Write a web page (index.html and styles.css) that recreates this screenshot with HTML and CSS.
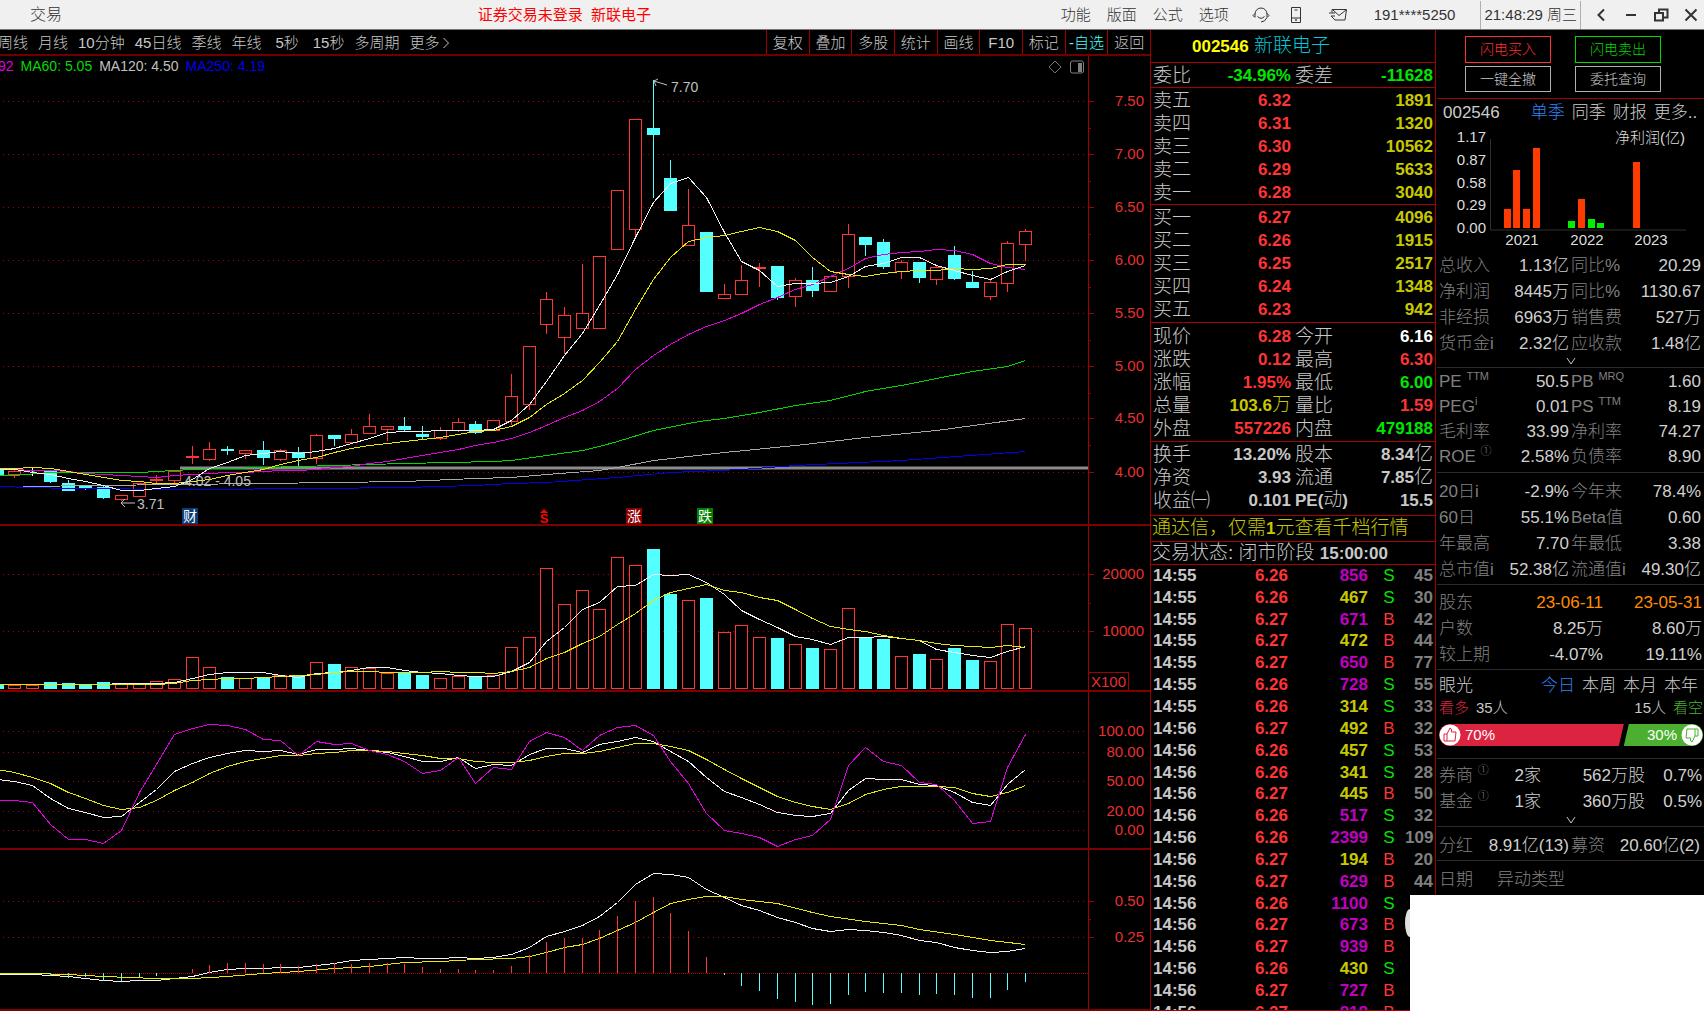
FILE: index.html
```html
<!DOCTYPE html>
<html lang="zh-CN">
<head>
<meta charset="utf-8">
<title>新联电子 002546</title>
<link rel="stylesheet" href="styles.css">
</head>
<body>
<header class="titlebar">
  <button class="title-trade">交易</button>
  <p class="title-status"><span>证券交易未登录</span> <span>新联电子</span></p>
  <nav class="title-menu">
    <button>功能</button><button>版面</button><button>公式</button><button>选项</button>
  </nav>
  <div class="title-icons">
    <button aria-label="客服"><svg width="18" height="18" viewBox="0 0 18 18"><path d="M3 11V8a6 6 0 0 1 12 0v3M3 7.500L1 9.500l2 2M15 7.500l2 2l-2 2q-2 4.500-6 4.500M5.500 10.500q3.500 3.500 7 0"/></svg></button>
    <button aria-label="手机"><svg width="12" height="18" viewBox="0 0 12 18"><path d="M1.500 1.500h9v15h-9zM4.500 4h3M1.500 12h9"/><circle cx="6" cy="14" r=".6"/></svg></button>
    <button aria-label="消息"><svg width="20" height="14" viewBox="0 0 20 14"><path d="M4 4.500V1.500h14.500l-1.500 10.500H7l-4-4h4M5 2l6 5.500 7-5.500M1 5h6"/></svg></button>
  </div>
  <span class="title-user">191****5250</span>
  <time class="title-clock">21:48:29 周三</time>
  <div class="window-buttons">
    <button aria-label="后退"><svg width="16" height="16" viewBox="0 0 16 16"><path d="M11 2.500L5.500 8l5.500 5.500"/></svg></button>
    <button aria-label="最小化"><svg width="16" height="16" viewBox="0 0 16 16"><path d="M3 8h10"/></svg></button>
    <button aria-label="还原"><svg width="16" height="16" viewBox="0 0 16 16"><path d="M2 6h8v7.500H2zM6 6V2.500h8.500v8H10"/></svg></button>
    <button aria-label="关闭"><svg width="16" height="16" viewBox="0 0 16 16"><path d="M2.500 2.500l11 11M13.500 2.500l-11 11"/></svg></button>
  </div>
</header>

<main class="workspace">
  <section class="charts">
    <div class="toolbar">
      <nav class="periods">
        <button>周线</button><button>月线</button><button>10分钟</button><button>45日线</button><button>季线</button><button>年线</button><button class="wide">5秒</button><button class="wide">15秒</button><button>多周期</button><button>更多 <svg width="8" height="12" viewBox="0 0 8 12"><path d="M1.500 1l5 5-5 5"/></svg></button>
      </nav>
      <nav class="tools">
        <button>复权</button><button>叠加</button><button>多股</button><button>统计</button><button>画线</button><button>F10</button><button>标记</button><button class="active">-自选</button><button>返回</button>
      </nav>
    </div>
    <div class="panels">
      <div class="panel">
        <p class="legend"><span class="ma20">92</span><span class="ma60">MA60: 5.05</span><span class="ma120">MA120: 4.50</span><span class="ma250">MA250: 4.19</span></p>
        <svg class="plot" id="price"></svg>
      </div>
      <div class="panel"><svg class="plot" id="volume"></svg></div>
      <div class="panel"><svg class="plot" id="kdj"></svg></div>
      <div class="panel"><svg class="plot" id="macd"></svg></div>
    </div>
  </section>

  <section class="quote">
    <h1 class="stock"><b>002546</b> <span>新联电子</span></h1>
    <table class="pairs"><tr><th>委比</th><td class="green">-34.96%</td><th>委差</th><td class="green">-11628</td></tr></table>
    <table class="pairs">
      <tr><th>卖五</th><td class="red">6.32</td><th></th><td class="olive">1891</td></tr>
      <tr><th>卖四</th><td class="red">6.31</td><th></th><td class="olive">1320</td></tr>
      <tr><th>卖三</th><td class="red">6.30</td><th></th><td class="olive">10562</td></tr>
      <tr><th>卖二</th><td class="red">6.29</td><th></th><td class="olive">5633</td></tr>
      <tr><th>卖一</th><td class="red">6.28</td><th></th><td class="olive">3040</td></tr>
    </table>
    <table class="pairs bids">
      <tr><th>买一</th><td class="red">6.27</td><th></th><td class="olive">4096</td></tr>
      <tr><th>买二</th><td class="red">6.26</td><th></th><td class="olive">1915</td></tr>
      <tr><th>买三</th><td class="red">6.25</td><th></th><td class="olive">2517</td></tr>
      <tr><th>买四</th><td class="red">6.24</td><th></th><td class="olive">1348</td></tr>
      <tr><th>买五</th><td class="red">6.23</td><th></th><td class="olive">942</td></tr>
    </table>
    <table class="pairs stats">
      <tr><th>现价</th><td class="red">6.28</td><th>今开</th><td class="white">6.16</td></tr>
      <tr><th>涨跌</th><td class="red">0.12</td><th>最高</th><td class="red">6.30</td></tr>
      <tr><th>涨幅</th><td class="red">1.95%</td><th>最低</th><td class="green">6.00</td></tr>
      <tr><th>总量</th><td class="olive">103.6<i>万</i></td><th>量比</th><td class="red">1.59</td></tr>
      <tr><th>外盘</th><td class="red">557226</td><th>内盘</th><td class="green">479188</td></tr>
    </table>
    <table class="pairs capital">
      <tr><th>换手</th><td>13.20%</td><th>股本</th><td>8.34<i>亿</i></td></tr>
      <tr><th>净资</th><td>3.93</td><th>流通</th><td>7.85<i>亿</i></td></tr>
      <tr><th>收益㈠</th><td>0.101</td><th><b>PE(</b>动<b>)</b></th><td>15.5</td></tr>
    </table>
    <p class="promo">通达信，仅需<b>1</b>元查看千档行情</p>
    <p class="state">交易状态: 闭市阶段 <b>15:00:00</b></p>
    <div class="ticks-wrap"><table class="ticks">
      <tr><td>14:55</td><td>6.26</td><td class="big">856</td><td class="s">S</td><td>45</td></tr>
      <tr><td>14:55</td><td>6.26</td><td>467</td><td class="s">S</td><td>30</td></tr>
      <tr><td>14:55</td><td>6.27</td><td class="big">671</td><td class="b">B</td><td>42</td></tr>
      <tr><td>14:55</td><td>6.27</td><td>472</td><td class="b">B</td><td>44</td></tr>
      <tr><td>14:55</td><td>6.27</td><td class="big">650</td><td class="b">B</td><td>77</td></tr>
      <tr><td>14:55</td><td>6.26</td><td class="big">728</td><td class="s">S</td><td>55</td></tr>
      <tr><td>14:55</td><td>6.26</td><td>314</td><td class="s">S</td><td>33</td></tr>
      <tr><td>14:56</td><td>6.27</td><td>492</td><td class="b">B</td><td>32</td></tr>
      <tr><td>14:56</td><td>6.26</td><td>457</td><td class="s">S</td><td>53</td></tr>
      <tr><td>14:56</td><td>6.26</td><td>341</td><td class="s">S</td><td>28</td></tr>
      <tr><td>14:56</td><td>6.27</td><td>445</td><td class="b">B</td><td>50</td></tr>
      <tr><td>14:56</td><td>6.26</td><td class="big">517</td><td class="s">S</td><td>32</td></tr>
      <tr><td>14:56</td><td>6.26</td><td class="big">2399</td><td class="s">S</td><td>109</td></tr>
      <tr><td>14:56</td><td>6.27</td><td>194</td><td class="b">B</td><td>20</td></tr>
      <tr><td>14:56</td><td>6.27</td><td class="big">629</td><td class="b">B</td><td>44</td></tr>
      <tr><td>14:56</td><td>6.26</td><td class="big">1100</td><td class="s">S</td><td></td></tr>
      <tr><td>14:56</td><td>6.27</td><td class="big">673</td><td class="b">B</td><td></td></tr>
      <tr><td>14:56</td><td>6.27</td><td class="big">939</td><td class="b">B</td><td></td></tr>
      <tr><td>14:56</td><td>6.26</td><td>430</td><td class="s">S</td><td></td></tr>
      <tr><td>14:56</td><td>6.27</td><td class="big">727</td><td class="b">B</td><td></td></tr>
      <tr><td>14:56</td><td>6.27</td><td class="big">818</td><td class="b">B</td><td></td></tr>
    </table></div>
  </section>

  <aside class="side">
    <div class="orders">
      <button class="buy">闪电买入</button><button class="sell">闪电卖出</button>
      <button>一键全撤</button><button>委托查询</button>
    </div>
    <nav class="report-tabs"><b>002546</b><button class="on">单季</button><button>同季</button><button>财报</button><button>更多..</button></nav>
    <svg class="profit" width="258" height="122" viewBox="0 0 258 122" role="img" aria-label="净利润(亿)">
      <path class="axis" d="M50.500 13v91H246"/>
      <g class="up"><rect x="64" y="83" width="7" height="19"/><rect x="73" y="44" width="7" height="58"/><rect x="83" y="83" width="7" height="19"/><rect x="93" y="22" width="7" height="80"/><rect x="138" y="73" width="7" height="29"/><rect x="193" y="36" width="7" height="66"/></g>
      <g class="down"><rect x="128" y="95" width="7" height="7"/><rect x="148" y="93" width="7" height="9"/><rect x="157" y="97" width="7" height="5"/></g>
      <g class="scale"><text x="46" y="16">1.17</text><text x="46" y="39">0.87</text><text x="46" y="62">0.58</text><text x="46" y="84">0.29</text><text x="46" y="107">0.00</text><text x="245" y="17">净利润(亿)</text></g>
      <g class="years"><text x="82" y="119">2021</text><text x="147" y="119">2022</text><text x="211" y="119">2023</text></g>
    </svg>
    <table class="facts first">
      <tr><th>总收入</th><td>1.13亿</td><th>同比%</th><td>20.29</td></tr>
      <tr><th>净利润</th><td>8445万</td><th>同比%</th><td>1130.67</td></tr>
      <tr><th>非经损</th><td>6963万</td><th>销售费</th><td>527万</td></tr>
      <tr><th>货币金i</th><td>2.32亿</td><th>应收款</th><td>1.48亿</td></tr>
    </table>
    <button class="more" aria-label="展开财务"><svg width="10" height="8" viewBox="0 0 10 8"><path d="M1 1l4 6 4-6"/></svg></button>
    <table class="facts tight">
      <tr><th>PE <sup>TTM</sup></th><td>50.5</td><th>PB <sup>MRQ</sup></th><td>1.60</td></tr>
      <tr><th>PEG<sup>i</sup></th><td>0.01</td><th>PS <sup>TTM</sup></th><td>8.19</td></tr>
      <tr><th>毛利率</th><td>33.99</td><th>净利率</th><td>74.27</td></tr>
      <tr><th>ROE <sup>①</sup></th><td>2.58%</td><th>负债率</th><td>8.90</td></tr>
    </table>
    <table class="facts">
      <tr><th>20日i</th><td>-2.9%</td><th>今年来</th><td>78.4%</td></tr>
      <tr><th>60日</th><td>55.1%</td><th>Beta值</th><td>0.60</td></tr>
      <tr><th>年最高</th><td>7.70</td><th>年最低</th><td>3.38</td></tr>
      <tr><th>总市值i</th><td>52.38亿</td><th>流通值i</th><td>49.30亿</td></tr>
    </table>
    <table class="facts holders">
      <tr><th>股东</th><td class="date">23-06-11</td><td class="date">23-05-31</td></tr>
      <tr><th>户数</th><td>8.25万</td><td>8.60万</td></tr>
      <tr><th>较上期</th><td>-4.07%</td><td>19.11%</td></tr>
    </table>
    <section class="mood">
      <nav class="report-tabs"><span>眼光</span><button class="on">今日</button><button>本周</button><button>本月</button><button>本年</button></nav>
      <p class="votes"><span class="bull">看多</span><span>35人</span><span class="right">15人</span><span class="bear">看空</span></p>
      <div class="split">
        <span class="split-up"><svg width="22" height="22" viewBox="0 0 22 22"><circle cx="11" cy="11" r="10.500"/><path d="M5 10h3v7H5zM8 10l3-6q2 0 1.500 4H17l-1 9H8"/></svg>70%</span>
        <span class="split-down">30%<svg width="22" height="22" viewBox="0 0 22 22"><circle cx="11" cy="11" r="10.500"/><path d="M17 12h-3V5h3zM14 12l-3 6q-2 0-1.500-4H5l1-9h8"/></svg></span>
      </div>
    </section>
    <table class="facts funds">
      <tr><th>券商 <sup>①</sup></th><td>2家</td><td>562万股</td><td>0.7%</td></tr>
      <tr><th>基金 <sup>①</sup></th><td>1家</td><td>360万股</td><td>0.5%</td></tr>
    </table>
    <button class="more" aria-label="展开机构"><svg width="10" height="8" viewBox="0 0 10 8"><path d="M1 1l4 6 4-6"/></svg></button>
    <table class="facts bonus"><tr><th>分红</th><td>8.91亿(13)</td><th>募资</th><td>20.60亿(2)</td></tr></table>
    <p class="events"><span>日期</span><span>异动类型</span></p>
  </aside>
</main>
<div class="popup"></div>
<script src="charts.js"></script>
</body>
</html>
```
FILE: styles.css
```css
* { box-sizing: border-box; margin: 0; padding: 0; }
body {
  height: 100vh; overflow: hidden; display: flex; flex-direction: column;
  background: #000; color: #c8c8c8;
  font: 300 15px/20px "Liberation Sans", "Noto Sans CJK SC", sans-serif;
}
button { background: none; border: 0; color: inherit; font: inherit; white-space: nowrap; }
svg { display: block; fill: none; stroke: currentColor; }
table { border-collapse: separate; border-spacing: 0; width: 100%; table-layout: fixed; }
th { font-weight: 300; text-align: left; }
td { text-align: right; }
th, td { white-space: nowrap; }
i { font-style: normal; font-weight: 300; }
b { font-weight: 700; }

/* title bar */
.titlebar {
  flex: none; height: 30px; display: flex; align-items: center;
  background: #f0f0f0; color: #333; border-bottom: 1px solid #777;
}
.title-trade { font-size: 16px; margin-left: 30px; }
.title-status { flex: 1; text-align: center; color: #f00; padding-left: 6px; font-weight: 400; }
.title-status span + span { margin-left: 4px; }
.title-menu { display: flex; gap: 16px; }
.title-icons { display: flex; align-items: center; gap: 26px; margin-left: 23px; }
.title-icons button:first-child { margin-right: -6px; }
.title-user { margin: 0 25px 0 26px; }
.title-clock { border: solid #b0b0b0; border-width: 0 1px; padding: 4px 3px; }
.window-buttons { display: flex; gap: 14px; padding: 0 5px 0 12px; }
.window-buttons svg { stroke-width: 2; }

.workspace { flex: 1; min-height: 0; display: grid; grid-template-columns: minmax(0, 1fr) 286px 268px; }

/* charts */
.charts { display: flex; flex-direction: column; min-width: 0; min-height: 0; }
.toolbar { flex: none; height: 26px; display: flex; justify-content: space-between; border-bottom: 2px solid #700000; }
.toolbar button { padding-top: 2px; }
.periods { display: flex; gap: 10px; margin-left: -2px; }
.periods button { display: flex; align-items: center; gap: 2px; }
.periods .wide { padding-left: 4px; }
.tools { display: grid; grid-template-columns: repeat(9, 1fr); width: 384px; }
.tools button { border-left: 1px solid #a00000; }
.tools .active { color: #4ff; }
.panels { flex: 1; min-height: 0; display: grid; grid-template-rows: 470fr 166fr 158fr 161fr; }
.panel { position: relative; min-height: 0; overflow: hidden; border-bottom: 2px solid #800000; }
.plot { width: 100%; height: 100%; }
.plot polyline { shape-rendering: crispEdges; }
.plot text { stroke: none; fill: #e83030; font-size: 15px; font-weight: 400; }
.plot .note { fill: #c0c0c0; font-size: 14px; }
.plot .flag { font-size: 14px; fill: #fff; text-anchor: middle; }
.plot .dividend { font-size: 13px; font-weight: 700; fill: #f00; }
.legend { position: absolute; left: -2px; top: 0; display: flex; gap: 7px; font-size: 14px; font-weight: 400; }
.ma20 { color: #d0d; } .ma60 { color: #0d0; } .ma120 { color: #c0c0c0; } .ma250 { color: #00e; }

/* quote column */
.quote { border: solid #a00000; border-width: 0 1px; display: flex; flex-direction: column; min-height: 0; overflow: hidden; }
.quote > * { flex: none; border-bottom: 1px solid #a80000; }
.quote table { font-size: 17px; font-weight: 700; }
.quote th { font-size: 19px; }
.quote i { font-size: 19px; }
.stock { height: 33px; padding-left: 41px; font-size: 19px; font-weight: 300; line-height: 32px; color: #00c8d8; }
.stock b { font-size: 17px; color: #ff0; }
.quote .pairs { padding-top: 1px; }
.quote .bids { padding-bottom: 1px; }
.quote .stats { padding: 2px 0 1px; }
.quote .capital { padding-bottom: 3px; }
.pairs tr { height: 23px; line-height: 22px; }
.pairs th, .pairs td { padding: 0 2px; height: 23px; }
.pairs th b { font-size: 17px; }
.pairs th:nth-child(1) { width: 62px; }
.pairs td:nth-child(2) { width: 80px; }
.pairs th:nth-child(3) { width: 62px; }
.promo { height: 26px; line-height: 24px; font-size: 19px; color: #c8c800; padding-left: 1px; }
.state { height: 23px; line-height: 22px; font-size: 19px; padding-left: 1px; }
.promo b, .state b { font-size: 17px; }
.red { color: #ff3434; } .green { color: #00e600; } .olive { color: #c8c800; } .white { color: #fff; }
.ticks-wrap { overflow: hidden; flex: 1; min-height: 0; }
.ticks { height: 459px; line-height: 20px; }
.ticks td:nth-child(1) { width: 56px; padding-left: 2px; text-align: left; }
.ticks td:nth-child(2) { width: 81px; color: #ff3434; }
.ticks td:nth-child(3) { width: 85px; padding-right: 5px; color: #c8c800; }
.ticks td:nth-child(4) { width: 32px; text-align: center; font-weight: 400; }
.ticks td:nth-child(5) { padding-right: 2px; color: #808080; }
.ticks td.big { color: #c000c0; }
.ticks td.s { color: #00e600; } .ticks td.b { color: #ff3434; }

/* fundamentals column */
.side { display: flex; flex-direction: column; font-size: 17px; min-width: 0; overflow: hidden; padding-left: 1px; }
.side > * { flex: none; }
.orders {
  display: grid; grid-template-columns: 86px 86px; gap: 3px 24px; padding: 6px 0 6px 28px;
  height: 69px; border-bottom: 1px solid #a00000; font-size: 14px;
}
.orders button { border: 1px solid #b0b0b0; }
.orders .buy { color: #ff3030; border-color: #ff3030; }
.orders .sell { color: #00d800; border-color: #00d800; }
.report-tabs { display: flex; gap: 7px; height: 27px; line-height: 27px; padding-left: 6px; color: #ccc; }
.report-tabs b { font-weight: 400; }
.report-tabs .on { color: #2f80f0; margin-left: 24px; }
.profit { margin-left: 3px; }
.profit .axis { stroke: #303030; }
.profit text { stroke: none; fill: #ddd; font-size: 15px; text-anchor: end; }
.profit .years text { text-anchor: middle; }
.profit rect { stroke: none; }
.up { fill: #ff3c00; } .down { fill: #00f000; }
.facts { border-bottom: 1px solid #2c2c2c; padding: 6px 2px 1px; color: #d0d0d0; }
.facts tr { height: 26px; line-height: 24px; }
.facts th { color: #808080; width: 58px; }
.facts td { width: 74px; padding-right: 2px; }
.facts sup { font-size: 11px; line-height: 11px; color: #808080; }
.facts.first { padding: 5px 2px 0; border: 0; }
.facts.tight { padding: 1px 2px 3px; }
.facts.tight tr { height: 25px; line-height: 23px; }
.more { height: 11px; display: flex; justify-content: center; border-bottom: 1px solid #2c2c2c; }
.facts.holders { padding-top: 5px; }
.holders td:nth-child(2) { width: 108px; }
.holders td:nth-child(3), .funds td:nth-child(4) { width: auto; padding-right: 0; }
.holders .date { color: #ff8c00; }
.mood { height: 89px; border-bottom: 1px solid #2c2c2c; padding: 3px 1px 0 2px; }
.mood .report-tabs { padding: 0; height: 25px; line-height: 25px; }
.mood .report-tabs .on { margin-left: 61px; }
.votes { display: flex; gap: 7px; font-size: 15px; }
.votes .right { margin-left: auto; }
.bull { color: #dc2440; } .bear { color: #4caf30; }
.split { display: flex; height: 22px; margin-top: 6px; font-size: 15px; line-height: 22px; font-weight: 400; color: #fff; }
.split span { display: flex; gap: 4px; }
.split svg { fill: #fff; stroke: none; }
.split path { stroke: #dc2440; }
.split-up { flex: 7; border-radius: 11px 0 0 11px; background: #dc2440; clip-path: polygon(0 0, 100% 0, calc(100% - 5px) 100%, 0 100%); }
.split-down { flex: 3; justify-content: flex-end; border-radius: 0 11px 11px 0; background: #4caf30; clip-path: polygon(5px 0, 100% 0, 100% 100%, 0 100%); }
.split-down path { stroke: #4caf30; }
.facts.funds { border: 0; padding: 4px 2px 1px; }
.funds td:nth-child(2) { width: 46px; }
.funds td:nth-child(3) { width: 104px; }
.bonus th:nth-child(1) { width: 36px; }
.bonus td:nth-child(2) { width: 96px; }
.bonus th:nth-child(3) { width: 36px; }
.bonus td:nth-child(4) { width: auto; }
.events { display: flex; gap: 24px; padding: 6px 2px; line-height: 26px; color: #808080; }

/* notification popup over the lower right corner */
.popup { position: fixed; right: 0; bottom: 0; width: 294px; height: 116px; background: #fff; }
.popup::before {
  content: ""; position: absolute; left: -5px; top: 14px; width: 5px; height: 28px;
  background: #e0e0e0; border-radius: 5px 0 0 5px / 14px 0 0 14px;
}
```
FILE: charts.js
```js
// Plot space: 1150 x 1011 units, anchored to the right edge; heights follow the panel.
const SPACE = 1150, LAST_X = 1025, STEP = 17.73, LAST = 57, AXIS = 1088;
const UP = '#ff3434', DOWN = '#54ffff';

// colour, body top, body bottom, high, low; the first candle is index -1
const candles = [
  'c,470,475,470,475','r,471,474,470,477','w,472,472,468,475','c,470,481,470,482','c,483,490,480,490',
  'c,485,488,485,489','c,487,497,485,498','r,495,499,495,500','r,483,496,483,496','r,479,480,475,483',
  'r,471,480,471,483','r,456,457,446,463','r,449,459,442,460','c,449,449,446,454','r,450,453,450,458',
  'c,450,457,441,464','r,450,459,449,460','c,452,457,447,466','r,435,458,434,463','c,435,438,435,445',
  'r,434,442,429,442','r,426,433,414,433','r,426,429,426,440','c,426,429,417,430','c,434,436,426,439',
  'r,430,438,427,439','r,422,430,418,431','c,424,432,421,433','r,420,430,420,430','r,396,421,374,424',
  'r,346,404,346,409','r,299,324,292,333','r,315,337,307,353','r,313,328,264,328','r,256,328,256,328',
  'r,190,249,190,249','r,119,229,119,237','c,128,134,80,197','c,178,210,160,210','r,225,245,189,245',
  'c,232,291,232,291','r,294,298,284,298','r,280,294,265,294','r,267,268,263,286','c,266,297,266,299',
  'r,280,296,278,306','c,280,290,267,296','r,276,291,276,291','r,234,276,224,287','c,237,244,237,255',
  'c,242,266,239,268','r,262,271,260,278','c,262,277,262,282','r,267,279,265,284','c,255,278,246,279',
  'c,282,287,271,287','r,282,296,279,299','r,243,283,241,291','r,231,244,229,260'
].map(s => s.split(','));

const volumes = [684,685,685,682,683,684,682,684,683,681,679,657,667,677,678,677,675,675,662,664,667,668,673,673,675,678,676,676,675,647,637,568,604,590,609,557,565,549,594,600,598,632,625,637,638,644,648,649,608,637,639,656,654,659,648,660,661,624,628];

const ma5 = [469,469,472,474,478,481,485,490,490,488,486,479,468,462,455,453,451,453,451,448,443,438,432,431,431,430,430,430,429,420,404,381,355,333,305,274,237,202,183,177,197,232,261,270,286,283,283,282,276,266,263,257,257,265,270,275,279,271,265];
const ma10 = [468,468,467,468,471,474,477,480,481,483,483,481,479,475,472,469,464,460,457,452,448,445,443,441,439,437,434,431,430,426,417,404,393,380,362,341,309,279,257,241,237,235,231,227,231,240,257,271,274,276,273,271,270,270,268,269,268,264,264];
const ma20 = [469,469,470,470,471,473,474,475,476,477,475,474,473,472,472,471,470,470,469,467,466,463,461,458,455,452,449,445,442,438,432,425,417,410,401,388,369,355,344,334,326,320,313,304,297,289,284,276,268,258,254,252,251,249,250,254,263,267,269];
const ma60 = [[-1,475],[0,475],[2,472],[7,472],[8,471],[10,469],[14,467],[18,465],[22,463],[27,461],[28,460],[30,455],[32,450],[33,446],[34,441],[36,430],[38,423],[39,420],[40,418],[42,412],[44,405],[46,400],[48,391],[50,385],[52,378],[54,371],[56,366],[57,360]];
const ma120 = [[.5,486],[9,484],[14,483],[18,482],[22,481],[26,478],[28,477],[30,474],[33,470],[34,467],[36,460],[40,452],[44,445],[48,437],[52,430],[57,418]];
const ma250 = [[-1,486],[3,488],[10,489],[17,488],[22,487],[26,485],[28,483],[30,482],[34,477],[37,472],[41,469],[44,465],[50,460],[57,451]];
const vol5 = [684,684,684,684,684,684,684,683,683,683,682,678,674,672,672,672,675,677,673,672,670,667,667,670,672,673,675,676,676,671,662,641,627,609,602,586,585,574,575,574,582,594,610,619,627,636,639,644,637,637,636,638,640,649,652,655,657,651,646];
const vol10 = [684,684,684,684,684,684,684,684,684,684,683,680,679,678,678,677,676,675,674,672,671,671,672,672,672,671,672,672,673,671,667,658,652,643,636,624,613,600,592,588,584,590,592,597,600,609,618,626,629,631,635,638,640,643,645,646,647,645,647];
const k = [779,781,785,798,808,812,817,816,802,789,771,763,757,753,750,751,750,754,749,749,748,750,752,756,761,761,757,768,764,765,754,748,748,752,744,741,737,741,751,761,777,791,797,804,812,815,816,813,790,778,779,779,784,785,792,802,805,784,769];
const d = [769,772,777,783,792,798,805,809,807,800,790,782,773,766,761,758,755,755,753,752,750,750,751,753,755,758,758,761,762,762,760,756,753,753,751,747,743,743,746,750,759,769,778,787,796,802,806,809,803,794,789,786,786,786,787,793,796,792,785];
const j = [800,800,802,824,839,839,843,830,792,764,734,728,724,725,729,739,740,755,741,744,743,750,754,761,773,770,757,783,767,769,741,732,737,750,735,727,725,735,761,783,813,830,833,837,846,839,835,819,765,747,761,765,782,784,800,823,821,767,734];
const bars = [973,973,973,976,978,977,981,981,977,976,973,969,965,963,963,964,964,966,964,963,964,963,963,964,967,969,969,970,970,966,955,942,938,938,930,916,901,897,913,931,957,975,986,991,999,1002,1005,1004,995,992,993,993,995,994,995,998,998,990,982];
const dif = [974,974,974,975,976,978,980,981,980,980,978,976,972,969,968,968,967,967,965,963,960,959,958,957,958,958,957,958,957,954,947,936,931,925,916,902,884,873,874,877,889,897,905,910,917,922,928,931,929,930,932,935,940,942,947,950,952,951,948];
const dea = [[-1,973],[1,973],[3,974],[5,976],[8,978],[10,978],[12,976],[14,973],[16,971],[18,968],[20,966],[22,962],[24,961],[26,959],[28,958],[29,956],[30,952],[31,947],[32,944],[33,938],[34,930],[35,922],[36,912],[37,903],[38,899],[39,896],[40,896],[41,899],[42,901],[43,903],[45,912],[46,916],[48,921],[50,925],[51,929],[53,934],[55,940],[57,944]];

function painter(id, top, height) {
  const svg = document.getElementById(id);
  const shift = svg.clientWidth - SPACE, ratio = svg.clientHeight / height;
  const X = x => x + shift, Y = y => (y - top) * ratio;
  const at = i => Math.round(X(LAST_X - (LAST - i) * STEP)) + .5;
  const out = [];
  const P = {
    X, Y, at,
    add: s => out.push(s),
    line(x1, y1, x2, y2, c, extra = '') { out.push(`<line x1="${x1}" y1="${y1}" x2="${x2}" y2="${y2}" stroke="${c}" ${extra}/>`); },
    grid(ys, dash = '1 4') { ys.forEach(y => P.line(3, Math.round(Y(y)) + .5, X(AXIS), Math.round(Y(y)) + .5, '#b00000', `stroke-dasharray="${dash}"`)); },
    curve(data, c) {
      const pts = data.map((p, n) => Array.isArray(p) ? p : [n - 1, p]);
      out.push(`<polyline points="${pts.map(p => at(p[0]) + ',' + (Y(p[1]) + .5)).join(' ')}" stroke="${c}"/>`);
    },
    box(i, y1, y2, c) {
      const x = at(i) - 6, h = Math.max(Y(y2) - Y(y1), 1);
      out.push(c === DOWN ? `<rect x="${x - .5}" y="${Y(y1)}" width="13" height="${h + 1}" fill="${c}" stroke="none"/>`
        : `<rect x="${x}" y="${Math.round(Y(y1)) + .5}" width="12" height="${Math.round(h)}" fill="#000" stroke="${c}"/>`);
    },
    text(x, y, s, cls = '', anchor = 'start') { out.push(`<text x="${X(x)}" y="${Y(y)}" class="${cls}" text-anchor="${anchor}">${s}</text>`); },
    axis(labels, ticks = []) {
      P.line(X(AXIS) + .5, 0, X(AXIS) + .5, svg.clientHeight, '#a00000');
      labels.forEach(([y, s]) => P.text(1144, y + 5, s, '', 'end'));
      ticks.forEach(([y, w]) => P.line(X(AXIS), Y(y) + .5, X(AXIS) + w, Y(y) + .5, '#a00000'));
    },
    done() { svg.innerHTML = out.join(''); }
  };
  return P;
}

function draw() {
  let p = painter('price', 56, 468);
  p.grid([101, 154, 207, 260, 313, 366, 418, 472]);
  p.line(p.X(180), p.Y(468), p.X(AXIS), p.Y(468), '#8c8c8c', 'stroke-width="3"');
  candles.forEach(([t, a, b, hi, lo], n) => {
    const i = n - 1, c = { r: UP, c: DOWN, w: '#fff' }[t], x = p.at(i);
    p.line(x, p.Y(+hi), x, p.Y(+lo) + 1, c);
    if (t === 'w') p.line(x - 1, p.Y(+a), x + 2, p.Y(+a), c); else p.box(i, +a, +b, c);
  });
  p.curve(ma120, '#a8a8a8'); p.curve(ma250, '#0000f0'); p.curve(ma60, '#00d800');
  p.curve(ma20, '#e000e0'); p.curve(ma10, '#e8e800'); p.curve(ma5, '#f0f0f0');
  p.text(184, 486, '4.02 - 4.05', 'note'); p.text(137, 509, '3.71', 'note'); p.text(671, 92, '7.70', 'note');
  p.add(`<path stroke="#c0c0c0" d="M${p.X(135)} ${p.Y(503)}h-14l4-4m-4 4l4 4M${p.X(667)} ${p.Y(85)}l-13-4l4-2m-4 2l2 5"/>`);
  [[190, '财', '#0a3c78'], [634, '涨', '#8c0000'], [705, '跌', '#008000']].forEach(([x, s, c]) => {
    p.add(`<rect x="${p.X(x - 8)}" y="${p.Y(508)}" width="16" height="16" fill="${c}" stroke="none"/>`);
    p.text(x, 521, s, 'flag', 'middle');
  });
  p.add(`<path fill="#f00" stroke="none" d="M${p.X(544)} ${p.Y(509)}l4 4h-8z"/>`);
  p.text(544, 523, 'S', 'dividend', 'middle');
  p.add(`<path stroke="#707070" d="M${p.X(1055)} ${p.Y(61)}l6 6l-6 6l-6-6z"/><rect x="${p.X(1070.5)}" y="${p.Y(61)}" width="13" height="12" rx="2" stroke="#808080"/><rect x="${p.X(1078)}" y="${p.Y(63)}" width="4" height="9" fill="#808080" stroke="none"/>`);
  p.axis([[101, '7.50'], [154, '7.00'], [207, '6.50'], [260, '6.00'], [313, '5.50'], [366, '5.00'], [418, '4.50'], [472, '4.00']],
    [101, 154, 207, 260, 313, 366, 418, 472].flatMap(y => [[y, 6], [y + 27, 3]]).slice(0, 15));
  p.done();

  p = painter('volume', 526, 164);
  p.grid([574, 631]);
  volumes.forEach((v, n) => p.box(n - 1, v, 688, candles[n][0] === 'c' ? DOWN : UP));
  p.curve(vol5, '#f0f0f0'); p.curve(vol10, '#e8e800');
  p.axis([[574, '20000'], [631, '10000']], [[574, 6], [603, 3], [631, 6]]);
  p.add(`<rect x="${p.X(AXIS) + .5}" y="${p.Y(672) + .5}" width="40" height="20" stroke="#a00000"/>`);
  p.text(1091, 687, 'X100');
  p.done();

  p = painter('kdj', 692, 156);
  p.grid([731, 752, 781, 811, 830]);
  p.curve(k, '#f0f0f0'); p.curve(d, '#e8e800'); p.curve(j, '#e000e0');
  p.axis([[731, '100.00'], [752, '80.00'], [781, '50.00'], [811, '20.00'], [830, '0.00']]);
  p.done();

  p = painter('macd', 850, 159);
  p.grid([901, 937]); p.grid([973], '1 1');
  p.curve(dif, '#f0f0f0'); p.curve(dea, '#e8e800');
  bars.forEach((v, n) => { if (v !== 973) p.line(p.at(n - 1), p.Y(973), p.at(n - 1), p.Y(v), v < 973 ? UP : DOWN); });
  p.axis([[901, '0.50'], [937, '0.25']], [[901, 6], [919, 3], [937, 6]]);
  p.done();
}
draw();
window.addEventListener('resize', draw);
```
